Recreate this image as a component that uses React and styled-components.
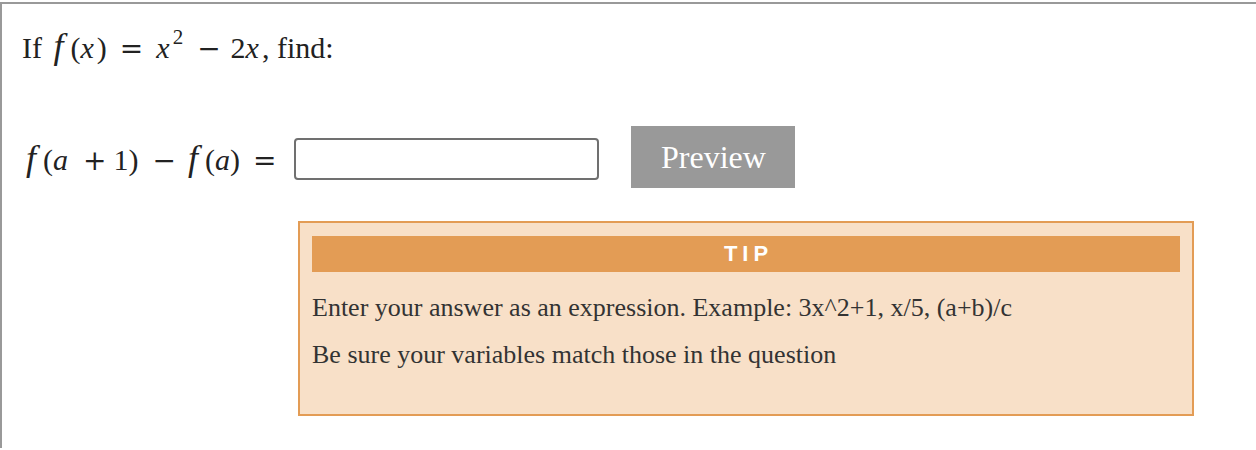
import styled, { createGlobalStyle } from 'styled-components';

const GlobalStyle = createGlobalStyle`
    body {
        margin: 0;
        background: #fff;
    }
`

const App = () => {
    return (
        <>
            <GlobalStyle />
            <Frame>
                <Question>
                    If{' '}
                    <MathSpan>
                        <Fn>f</Fn>(<Var $right={3}>x</Var>)
                        <Op $left={13} $right={13}>=</Op>
                        <Var $right={3}>x</Var><Sup>2</Sup>
                        <Op $left={14} $right={10}>−</Op>
                        2<Var $right={3}>x</Var>
                    </MathSpan>, find:
                </Question>
                <AnswerRow>
                    <AnswerLabel>
                        <MathSpan>
                            <Fn>f</Fn>(<Var>a</Var>
                            <Op $left={15} $right={7}>+</Op>
                            1)
                            <Op $left={14} $right={8}>−</Op>
                            <Fn>f</Fn>(<Var>a</Var>)
                            <Op $left={13} $right={0}>=</Op>
                        </MathSpan>
                    </AnswerLabel>
                    <AnswerInput type="text" />
                    <PreviewButton>Preview</PreviewButton>
                </AnswerRow>
                <TipBox>
                    <TipHeader>TIP</TipHeader>
                    <TipLine>Enter your answer as an expression. Example: 3x^2+1, x/5, (a+b)/c</TipLine>
                    <TipLine>Be sure your variables match those in the question</TipLine>
                </TipBox>
            </Frame>
        </>
    )
}

const Frame = styled.div`
    margin-top: 2px;
    border-top: 2px solid #999;
    border-left: 2px solid #999;
    height: 446px;
    box-sizing: border-box;
    padding: 24px 0 0 20px;
    font-family: "Liberation Serif", "DejaVu Serif", serif;
    color: #222;
`

const Question = styled.div`
    font-size: 30px;
    line-height: 40px;
    height: 40px;
    white-space: nowrap;
`

const MathSpan = styled.span`
    font-size: 30px;
    font-family: "Liberation Serif", serif;
    white-space: nowrap;
`

const Var = styled.i`
    font-style: italic;
    padding-left: ${p => p.$left || 0}px;
    padding-right: ${p => p.$right || 0}px;
`

// the function name f, drawn larger to get the wide math-italic look
const Fn = styled.i`
    font-style: italic;
    font-size: 36px;
    line-height: 0;
    padding: 0 7px 0 4px;
`

const Op = styled.span`
    font-family: "DejaVu Serif", serif;
    font-size: 28px;
    margin: 0 ${p => p.$right}px 0 ${p => p.$left}px;
`

const Sup = styled.sup`
    font-size: 21px;
    vertical-align: 14px;
    line-height: 0;
`

const AnswerRow = styled.div`
    display: flex;
    align-items: center;
    margin-top: 58px;
    height: 62px;
`

const AnswerLabel = styled.div`
    line-height: 40px;
    padding-top: 11px;
`

const AnswerInput = styled.input`
    width: 305px;
    height: 42px;
    box-sizing: border-box;
    margin: 4px 0 0 18px;
    border: 2px solid #707070;
    border-radius: 4px;
    background: #fff;
`

const PreviewButton = styled.button`
    margin-left: 32px;
    width: 164px;
    height: 62px;
    border: none;
    background: #999;
    color: #fff;
    font-family: "Liberation Serif", serif;
    font-size: 32px;
    padding: 0;
`

const TipBox = styled.div`
    margin: 33px 0 0 276px;
    width: 896px;
    height: 195px;
    box-sizing: border-box;
    border: 2px solid #e39c55;
    background: #f8e0c8;
    padding: 13px 12px 0 12px;
`

const TipHeader = styled.div`
    background: #e39c55;
    color: #fff;
    height: 36px;
    line-height: 36px;
    text-align: center;
    font-family: "Liberation Sans", Arial, sans-serif;
    font-weight: bold;
    font-size: 22px;
    letter-spacing: 5px;
    padding-left: 5px;
    margin-bottom: 21px;
`

const TipLine = styled.div`
    font-size: 26px;
    line-height: 30px;
    color: #333;
    margin-bottom: 17px;
`

export default App
